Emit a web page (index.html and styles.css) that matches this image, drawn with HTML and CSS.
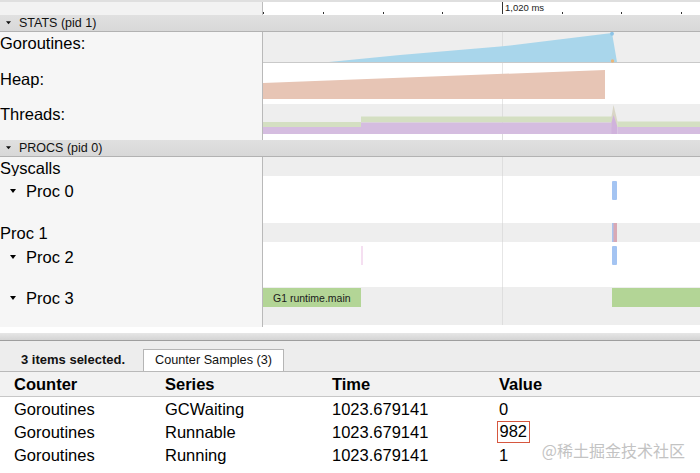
FILE: index.html
```html
<!DOCTYPE html>
<html>
<head>
<meta charset="utf-8">
<link rel="stylesheet" href="styles.css">
</head>
<body>
<div class="timeline">
  <div class="ruler">
    <div class="ruler-left"></div>
    <div class="ruler-track">
      <svg viewBox="0 0 437 13" preserveAspectRatio="none">
        <g fill="#333">
          <rect x="0" y="10" width="1" height="2"/>
          <rect x="60" y="10" width="1" height="2"/>
          <rect x="120" y="10" width="1" height="2"/>
          <rect x="179" y="10" width="1" height="2"/>
          <rect x="299" y="10" width="1" height="2"/>
          <rect x="358" y="10" width="1" height="2"/>
          <rect x="418" y="10" width="1" height="2"/>
          <rect x="239" y="0" width="1" height="12"/>
        </g>
        <text x="242" y="9" class="ruler-label">1,020 ms</text>
      </svg>
    </div>
  </div>

  <div class="group-header"><svg class="tri-s" viewBox="0 0 5 3"><polygon points="0,0 5,0 2.5,3"/></svg>STATS (pid 1)</div>

  <div class="row h31">
    <div class="label pt2"><div class="line">Goroutines:</div></div>
    <div class="track">
      <svg viewBox="0 0 437 31" preserveAspectRatio="none">
        <rect x="0" y="0" width="437" height="30" fill="#eeeeee"/>
        <rect x="0" y="30" width="437" height="1" fill="#c9c9c9"/>
        <rect x="239" y="0" width="1" height="30" fill="#dedede"/>
        <polygon points="66,30 137,23 237,14.6 349,1 354,30" fill="#a9d6eb"/>
        <circle cx="349" cy="1.8" r="1.9" fill="#8cc3e6"/>
        <circle cx="349.5" cy="29" r="1.7" fill="#eab77a"/>
      </svg>
    </div>
  </div>

  <div class="row h41">
    <div class="label pt7"><div class="line">Heap:</div></div>
    <div class="track">
      <svg viewBox="0 0 437 41" preserveAspectRatio="none">
        <rect x="239" y="0" width="1" height="41" fill="#e6e6e6"/>
        <polygon points="0,20 342,7 342,36 0,36" fill="#e7c5b5"/>
      </svg>
    </div>
  </div>

  <div class="row h36">
    <div class="label pt1"><div class="line">Threads:</div></div>
    <div class="track">
      <svg viewBox="0 0 437 36" preserveAspectRatio="none">
        <rect x="0" y="0" width="437" height="30" fill="#eeeeee"/>
        <rect x="239" y="0" width="1" height="36" fill="#dedede"/>
        <rect x="0" y="18" width="98" height="5" fill="#d4dfc2"/>
        <rect x="0" y="23" width="98" height="7" fill="#d5bde0"/>
        <rect x="98" y="12.5" width="251" height="6" fill="#d4dfc2"/>
        <rect x="98" y="18.5" width="251" height="11.5" fill="#d5bde0"/>
        <polygon points="348.5,12.5 350.5,1 354.5,17.5 354.5,23 348.5,23" fill="#d9d6c6"/>
        <polygon points="348.5,18.5 350.5,11 354.5,23 354.5,30 348.5,30" fill="#d0b2dc"/>
        <rect x="354.5" y="17.5" width="83" height="5.5" fill="#d4dfc2"/>
        <rect x="354.5" y="23" width="83" height="7" fill="#d5bde0"/>
      </svg>
    </div>
  </div>

  <div class="group-header"><svg class="tri-s" viewBox="0 0 5 3"><polygon points="0,0 5,0 2.5,3"/></svg>PROCS (pid 0)</div>

  <div class="row h19">
    <div class="label pt2"><div class="line">Syscalls</div></div>
    <div class="track">
      <svg viewBox="0 0 437 19" preserveAspectRatio="none">
        <rect x="0" y="0" width="437" height="19" fill="#eeeeee"/>
        <rect x="239" y="0" width="1" height="19" fill="#dedede"/>
      </svg>
    </div>
  </div>

  <div class="row h47">
    <div class="label pt6"><div class="line proc"><svg class="tri" viewBox="0 0 6 4"><polygon points="0,0 6,0 3,4"/></svg>Proc 0</div></div>
    <div class="track">
      <svg viewBox="0 0 437 47" preserveAspectRatio="none">
        <rect x="239" y="0" width="1" height="47" fill="#e6e6e6"/>
        <rect x="349" y="5" width="5" height="19" rx="1" fill="#a4c4f2"/>
      </svg>
    </div>
  </div>

  <div class="row h19">
    <div class="label pt1"><div class="line">Proc 1</div></div>
    <div class="track">
      <svg viewBox="0 0 437 19" preserveAspectRatio="none">
        <rect x="0" y="0" width="437" height="19" fill="#eeeeee"/>
        <rect x="239" y="0" width="1" height="19" fill="#dedede"/>
        <rect x="349" y="0" width="5" height="19" fill="#d9a9b4"/>
        <rect x="349" y="0" width="1.5" height="19" fill="#a9c3ee"/>
      </svg>
    </div>
  </div>

  <div class="row h45">
    <div class="label pt5"><div class="line proc"><svg class="tri" viewBox="0 0 6 4"><polygon points="0,0 6,0 3,4"/></svg>Proc 2</div></div>
    <div class="track">
      <svg viewBox="0 0 437 45" preserveAspectRatio="none">
        <rect x="239" y="0" width="1" height="45" fill="#e6e6e6"/>
        <rect x="98.5" y="4" width="1" height="19" fill="#ecc0e4"/>
        <rect x="349" y="4" width="5" height="19" rx="1" fill="#a4c4f2"/>
      </svg>
    </div>
  </div>

  <div class="row h40">
    <div class="label pt2"><div class="line proc"><svg class="tri" viewBox="0 0 6 4"><polygon points="0,0 6,0 3,4"/></svg>Proc 3</div></div>
    <div class="track">
      <svg viewBox="0 0 437 40" preserveAspectRatio="none">
        <rect x="0" y="0" width="437" height="38" fill="#eeeeee"/>
        <rect x="239" y="0" width="1" height="38" fill="#dedede"/>
        <rect x="0" y="1" width="98" height="19" fill="#b3d596"/>
        <text x="10" y="14.5" class="slice-label">G1 runtime.main</text>
        <rect x="349" y="1" width="88" height="19" fill="#b3d596"/>
      </svg>
    </div>
  </div>
  <div class="filler"></div>
</div>

<div class="splitter"></div>

<div class="details">
  <div class="tabs">
    <div class="sel">3 items selected.</div>
    <div class="tab">Counter Samples (3)</div>
  </div>
  <div class="table">
    <div class="trow thead">
      <div>Counter</div><div>Series</div><div>Time</div><div>Value</div>
    </div>
    <div class="trow">
      <div>Goroutines</div><div>GCWaiting</div><div>1023.679141</div><div>0</div>
    </div>
    <div class="trow">
      <div>Goroutines</div><div>Runnable</div><div>1023.679141</div><div><span class="mark">982</span></div>
    </div>
    <div class="trow">
      <div>Goroutines</div><div>Running</div><div>1023.679141</div><div>1</div>
    </div>
  </div>
  <div class="watermark">@稀土掘金技术社区</div>
</div>
</body>
</html>
```

FILE: styles.css
```css
* { box-sizing: border-box; }
html, body { margin: 0; padding: 0; }
body {
  width: 700px;
  height: 473px;
  overflow: hidden;
  background: #fff;
  color: #000;
  font-family: "Liberation Sans", Arial, sans-serif;
}
svg { display: block; }

.ruler {
  display: flex;
  height: 15px;
  border-top: 2px solid #dfdfdf;
}
.ruler-left {
  width: 263px;
  background: #f2f2f2;
  border-right: 1px solid #bdbdbd;
}
.ruler-track { flex: 1; background: #fff; }
.ruler-track svg { width: 437px; height: 13px; }
.ruler-label {
  font-family: "Liberation Sans", Arial, sans-serif;
  font-size: 9.5px;
  fill: #222;
}

.group-header {
  height: 17px;
  line-height: 16px;
  background: linear-gradient(#e0e0e0, #d8d8d8);
  border-bottom: 1px solid #b2b2b2;
  font-size: 12.5px;
  color: #111;
  display: flex;
  align-items: center;
  padding-left: 6px;
}
.tri-s { width: 5px; height: 3.5px; margin-right: 8px; fill: #111; }

.row { display: flex; }
.h19 { height: 19px; }
.h31 { height: 31px; }
.h36 { height: 36px; }
.h40 { height: 40px; }
.h41 { height: 41px; }
.h45 { height: 45px; }
.h47 { height: 47px; }

.label {
  width: 263px;
  flex: none;
  background: #f6f6f6;
  border-right: 1px solid #b9b9b9;
  font-size: 16.5px;
  color: #000;
}
.pt1 { padding-top: 1px; }
.pt2 { padding-top: 2px; }
.pt5 { padding-top: 5.5px; }
.pt6 { padding-top: 6px; }
.pt7 { padding-top: 7px; }
.line {
  height: 18px;
  line-height: 18px;
  display: flex;
  align-items: center;
  white-space: nowrap;
}
.line.proc { padding-left: 10px; }
.tri { width: 6px; height: 4px; margin-right: 10px; fill: #000; }

.track { flex: 1; background: #fff; }
.track svg { width: 437px; height: 100%; }
.slice-label {
  font-family: "Liberation Sans", Arial, sans-serif;
  font-size: 10.5px;
  fill: #1a1a1a;
}

.filler { height: 6px; background: #fff; }

.splitter {
  height: 8px;
  background: linear-gradient(#e6e6e6, #d4d4d4);
  border-bottom: 1px solid #9e9e9e;
}

.details { position: relative; height: 132px; }
.tabs {
  height: 31px;
  background: #ededed;
  border-bottom: 1px solid #b9b9b9;
  display: flex;
  align-items: flex-end;
}
.sel {
  width: 143px;
  padding-left: 21px;
  font-size: 13px;
  font-weight: bold;
  height: 22px;
  line-height: 22px;
  color: #111;
}
.tab {
  height: 22px;
  line-height: 21px;
  padding: 0 11px;
  background: #fff;
  border: 1px solid #b5b5b5;
  border-bottom: none;
  font-size: 12.7px;
  color: #111;
}

.table { font-size: 16.5px; color: #000; }
.trow {
  display: grid;
  grid-template-columns: 151px 167px 167px 1fr;
  padding-left: 14px;
  height: 23px;
  align-items: center;
  padding-top: 1px;
}
.trow > div { display: flex; align-items: center; }
.thead {
  height: 25px;
  background: #f2f2f2;
  border-bottom: 1px solid #c7c7c7;
  font-weight: bold;
}
.mark {
  display: inline-block;
  margin-left: -2px;
  padding: 0 1.5px;
  height: 22px;
  line-height: 19px;
  border: 1.5px solid #d6573f;
}

.watermark {
  position: absolute;
  right: 15px;
  bottom: 14px;
  font-family: "Noto Sans CJK SC", sans-serif;
  font-size: 16px;
  line-height: 18px;
  color: #c3c3c3;
}
```
